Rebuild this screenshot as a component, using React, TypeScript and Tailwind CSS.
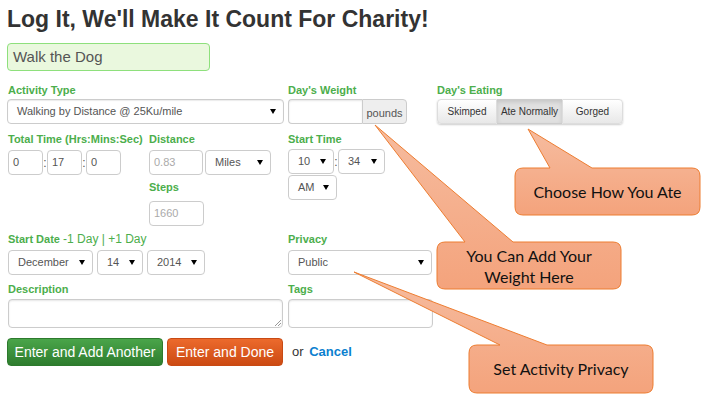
import React from "react";

const label = "block h-4 whitespace-nowrap text-[11px] leading-4 font-bold text-[#4cae4c]";
const box = "h-[25px] rounded-[4px] border border-[#ccc] bg-white text-[11px] text-[#555] flex items-center whitespace-nowrap";

function Arrow() {
  return (
    <span className="ml-auto mr-[7px] h-0 w-0 border-x-[3px] border-t-[5px] border-x-transparent border-t-black" />
  );
}

function Select({ value, w, h = "h-[25px]", extra = "" }: { value: string; w: string; h?: string; extra?: string }) {
  return (
    <div className={`${box} ${w} ${h} ${extra} pl-[9px]`}>
      <span>{value}</span>
      <Arrow />
    </div>
  );
}

function Field({ value, w, muted = false, h = "h-[25px]" }: { value?: string; w: string; muted?: boolean; h?: string }) {
  return (
    <div className={`${box} ${w} ${h} pl-[4px] ${muted ? "text-[#aaa]" : ""}`}>
      {value}
    </div>
  );
}

const Colon = () => <span className="w-[4px] text-center text-[12px] leading-none text-[#555]">:</span>;

export default function App() {
  return (
    <div className="relative h-[407px] w-[712px] overflow-hidden bg-white font-[family-name:'Liberation_Sans',Arial,sans-serif]">
      <div className="pl-[7px] pt-[6px]">
        <h1 className="whitespace-nowrap text-[23px] leading-[26px] font-bold text-[#333]">
          Log It, We'll Make It Count For Charity!
        </h1>
        <div className="mt-[11px] flex h-[28px] w-[203px] items-center rounded-[4px] border border-[#8ee07c] bg-[#eaf8de] pl-[5px] text-[15px] text-[#555]">
          Walk the Dog
        </div>

        {/* row 1 */}
        <div className="mt-[11px] flex">
          <div className="w-[281px]">
            <span className={`${label} ml-px`}>Activity Type</span>
            <div className="mt-px">
              <Select value="Walking by Distance @ 25Ku/mile" w="w-[277px]" extra="border-[#8fb0e0] shadow-[inset_0_1px_1px_rgba(0,0,0,0.08)]" />
            </div>
          </div>
          <div className="w-[149px]">
            <span className={label}>Day's Weight</span>
            <div className="mt-px flex h-[25px] w-[119px]">
              <div className="w-[74px] rounded-l-[4px] border border-r-0 border-[#ccc] shadow-[inset_0_1px_2px_rgba(0,0,0,0.1)]" />
              <div className="flex w-[45px] items-center justify-center rounded-r-[4px] border border-[#ccc] bg-[#eee] pt-[3px] text-[11px] text-[#555]">
                pounds
              </div>
            </div>
          </div>
          <div>
            <span className={label}>Day's Eating</span>
            <div className="mt-px flex h-[25px] whitespace-nowrap rounded-[4px] text-[10px] text-[#333] shadow-[0_1px_2px_rgba(0,0,0,0.2)]">
              <div className="flex w-[60px] items-center justify-center rounded-l-[4px] border border-[#ddd] bg-gradient-to-b from-white to-[#e8e8e8]">Skimped</div>
              <div className="flex w-[65px] items-center justify-center border-y border-[#ccc] bg-[#e0e0e0] shadow-[inset_0_2px_4px_rgba(0,0,0,0.12)]">Ate Normally</div>
              <div className="flex w-[61px] items-center justify-center rounded-r-[4px] border border-[#ddd] bg-gradient-to-b from-white to-[#e8e8e8]">Gorged</div>
            </div>
          </div>
        </div>

        {/* row 2 */}
        <div className="mt-[7px] flex">
          <div className="w-[142px] pl-px">
            <span className={label}>Total Time (Hrs:Mins:Sec)</span>
            <div className="mt-[3px] flex items-center">
              <Field value="0" w="w-[35px]" />
              <Colon />
              <Field value="17" w="w-[35px]" />
              <Colon />
              <Field value="0" w="w-[35px]" />
            </div>
          </div>
          <div className="w-[139px]">
            <span className={label}>Distance</span>
            <div className="mt-[3px] flex gap-[2px]">
              <Field value="0.83" w="w-[54px]" muted />
              <Select value="Miles" w="w-[66px]" />
            </div>
            <span className={`${label} mt-[4px]`}>Steps</span>
            <div className="mt-[6px]">
              <Field value="1660" w="w-[55px]" muted h="h-[24px]" />
            </div>
          </div>
          <div>
            <span className={label}>Start Time</span>
            <div className="mt-[2px] flex items-center">
              <Select value="10" w="w-[46px]" />
              <Colon />
              <Select value="34" w="w-[47px]" />
            </div>
            <div className="mt-px">
              <Select value="AM" w="w-[49px]" h="h-[24px]" />
            </div>
          </div>
        </div>

        {/* row 3 */}
        <div className="mt-[5px] flex">
          <div className="w-[281px] pl-px">
            <span className={label}>
              Start Date <span className="text-[12px] font-normal">-1 Day | +1 Day</span>
            </span>
            <div className="mt-[3px] flex gap-[4px]">
              <Select value="December" w="w-[85px]" h="h-[24px]" />
              <Select value="14" w="w-[46px]" h="h-[24px]" />
              <Select value="2014" w="w-[58px]" h="h-[24px]" />
            </div>
          </div>
          <div>
            <span className={label}>Privacy</span>
            <div className="mt-[3px]">
              <Select value="Public" w="w-[144px]" h="h-[24px]" />
            </div>
          </div>
        </div>

        {/* row 4 */}
        <div className="mt-[6px] flex">
          <div className="w-[281px] pl-px">
            <span className={label}>Description</span>
            <div className="relative mt-[2px] h-[29px] w-[275px] rounded-[4px] border border-[#ccc] shadow-[inset_0_1px_2px_rgba(0,0,0,0.1)]">
              <span className="absolute bottom-[1px] right-[1px] h-[6px] w-[6px] bg-[linear-gradient(135deg,transparent_45%,#999_45%,#999_55%,transparent_55%,transparent_70%,#999_70%,#999_80%,transparent_80%)]" />
            </div>
          </div>
          <div>
            <span className={label}>Tags</span>
            <div className="mt-[2px] h-[29px] w-[145px] rounded-[4px] border border-[#ccc] shadow-[inset_0_1px_2px_rgba(0,0,0,0.1)]" />
          </div>
        </div>

        {/* buttons */}
        <div className="mt-[10px] flex items-center whitespace-nowrap">
          <div className="flex h-[28px] w-[156px] items-center justify-center rounded-[4px] border border-[#2d7a2d] bg-gradient-to-b from-[#4aa54a] to-[#2e7d2e] text-[14px] text-white">
            Enter and Add Another
          </div>
          <div className="ml-[4px] flex h-[28px] w-[116px] items-center justify-center rounded-[4px] border border-[#c84a14] bg-gradient-to-b from-[#ec6a2c] to-[#cc4a12] text-[14px] text-white">
            Enter and Done
          </div>
          <span className="ml-[9px] text-[13px] text-[#333]">
            or <span className="ml-[2px] font-bold text-[#0b80cf]">Cancel</span>
          </span>
        </div>
      </div>

      {/* callouts */}
      <svg className="pointer-events-none absolute inset-0" width="712" height="407" viewBox="0 0 712 407">
        <defs>
          <linearGradient id="cg" x1="0" y1="0" x2="0" y2="1">
            <stop offset="0" stopColor="#f6bc9f" />
            <stop offset="1" stopColor="#f4a37c" />
          </linearGradient>
        </defs>
        <path
          d="M523,168 L550,168 L528,129 L592,168 L692,168 Q700,168 700,176 L700,207 Q700,215 692,215 L523,215 Q515,215 515,207 L515,176 Q515,168 523,168 Z"
          fill="url(#cg)"
          stroke="#ed7d31"
        />
        <path
          d="M445,242 L465,242 L375,125 L513,242 L613,242 Q621,242 621,250 L621,281 Q621,289 613,289 L445,289 Q437,289 437,281 L437,250 Q437,242 445,242 Z"
          fill="url(#cg)"
          stroke="#ed7d31"
        />
        <path
          d="M477,345 L500,345 L354,272 L547,345 L645,345 Q653,345 653,353 L653,385 Q653,393 645,393 L477,393 Q469,393 469,385 L469,353 Q469,345 477,345 Z"
          fill="url(#cg)"
          stroke="#ed7d31"
        />
      </svg>
      <div className="absolute left-[515px] top-[168px] flex h-[47px] w-[185px] items-center justify-center font-[family-name:Lato,sans-serif] text-[16px] text-[#111]">
        Choose How You Ate
      </div>
      <div className="absolute left-[437px] top-[242px] flex h-[47px] w-[184px] flex-col items-center justify-center font-[family-name:Lato,sans-serif] text-[16px] leading-[21px] text-[#111]">
        <span>You Can Add Your</span>
        <span>Weight Here</span>
      </div>
      <div className="absolute left-[469px] top-[345px] flex h-[48px] w-[184px] items-center justify-center font-[family-name:Lato,sans-serif] text-[16px] text-[#111]">
        Set Activity Privacy
      </div>
    </div>
  );
}
